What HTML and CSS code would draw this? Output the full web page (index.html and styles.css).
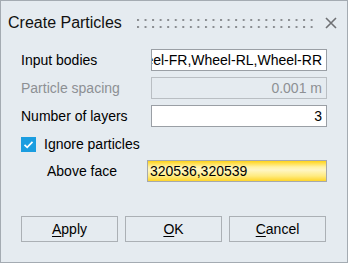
FILE: index.html
```html
<!DOCTYPE html>
<html>
<head>
<meta charset="utf-8">
<link rel="stylesheet" href="styles.css">
</head>
<body>
<div class="dialog">
  <div class="titlebar">
    <span class="title">Create Particles</span>
    <svg class="grip" width="178" height="10" viewBox="0 0 178 10">
      <defs>
        <pattern id="dots" x="0" y="0" width="7.55" height="7" patternUnits="userSpaceOnUse">
          <rect x="0" y="0" width="2" height="2" fill="#8a8d91"/>
        </pattern>
      </defs>
      <rect x="0" y="0" width="176" height="9" fill="url(#dots)"/>
    </svg>
    <svg class="close" width="12" height="12" viewBox="0 0 12 12">
      <path d="M1 1 L11 11 M11 1 L1 11" stroke="#6f7174" stroke-width="1.6" fill="none"/>
    </svg>
  </div>
  <div class="form">
    <div class="row">
      <span class="label">Input bodies</span>
      <div class="field scroll"><span>Wheel-FL,Wheel-FR,Wheel-RL,Wheel-RR</span></div>
    </div>
    <div class="row">
      <span class="label disabled">Particle spacing</span>
      <div class="field off"><span>0.001 m</span></div>
    </div>
    <div class="row">
      <span class="label">Number of layers</span>
      <div class="field num"><span>3</span></div>
    </div>
    <div class="check-row">
      <span class="checkbox">
        <svg width="15" height="15" viewBox="0 0 15 15"><path d="M3.5 7.8 L6.2 10.3 L11.5 4.8" stroke="#fff" stroke-width="1.7" fill="none"/></svg>
      </span>
      <span class="label">Ignore particles</span>
    </div>
    <div class="row sub">
      <span class="label">Above face</span>
      <div class="field hl"><span>320536,320539</span></div>
    </div>
  </div>
  <div class="buttons">
    <button class="btn"><u>A</u>pply</button>
    <button class="btn"><u>O</u>K</button>
    <button class="btn"><u>C</u>ancel</button>
  </div>
</div>
</body>
</html>
```
FILE: styles.css
```css
* { box-sizing: border-box; }
html, body { margin: 0; padding: 0; }
body {
  font-family: "Liberation Sans", Arial, sans-serif;
  font-size: 14px;
  color: #000;
  background: #e5ebf0;
}
.dialog {
  width: 348px;
  height: 263px;
  border: 1px solid #a4abb2;
  background: #e5ebf0;
  display: flex;
  flex-direction: column;
}
.titlebar {
  height: 43px;
  display: flex;
  align-items: center;
  padding-left: 7px;
}
.title {
  font-size: 16px;
  color: #111;
  width: 129px;
}
.grip {
  display: block;
  margin-top: 2px;
}
.close {
  display: block;
  margin-left: 10px;
}
.form {
  padding: 5px 20px 0 20px;
  display: flex;
  flex-direction: column;
}
.row {
  display: flex;
  align-items: center;
  height: 22px;
  margin-bottom: 6px;
}
.label {
  flex: 1;
  white-space: nowrap;
}
.label.disabled { color: #8d9094; }
.field {
  width: 176px;
  height: 22px;
  border: 1px solid #9a9fa5;
  background: #fff;
  display: flex;
  align-items: center;
  overflow: hidden;
  white-space: nowrap;
  padding: 0 4px 0 3px;
}
.field.scroll, .field.num, .field.off { justify-content: flex-end; }
.field.off {
  background: #e5ebf0;
  border-color: #b9bec3;
  color: #8d9094;
}
.check-row {
  display: flex;
  align-items: center;
  height: 22px;
  gap: 8px;
}
.check-row .label { flex: none; }
.checkbox {
  width: 15px;
  height: 15px;
  background: #1a9de0;
  display: block;
}
.checkbox svg { display: block; }
.row.sub {
  margin-top: 5px;
  padding-left: 26px;
}
.field.hl {
  width: 180px;
  border-color: #a6a9ad;
  background: linear-gradient(#ffd318 0%, #fff2a6 30%, #fff6c4 45%, #ffeb80 75%, #ffd52a 100%);
  padding-left: 2px;
}
.buttons {
  display: grid;
  grid-template-columns: repeat(3, 97px);
  gap: 7px;
  padding: 0 20px;
  margin-top: 28px;
}
.btn {
  height: 26px;
  border: 1px solid #abb0b5;
  background: #e5ebf0;
  font-family: "Liberation Sans", Arial, sans-serif;
  font-size: 14px;
  color: #000;
  padding: 0;
}
.btn u { text-decoration-thickness: 1px; text-underline-offset: 2px; }
```
